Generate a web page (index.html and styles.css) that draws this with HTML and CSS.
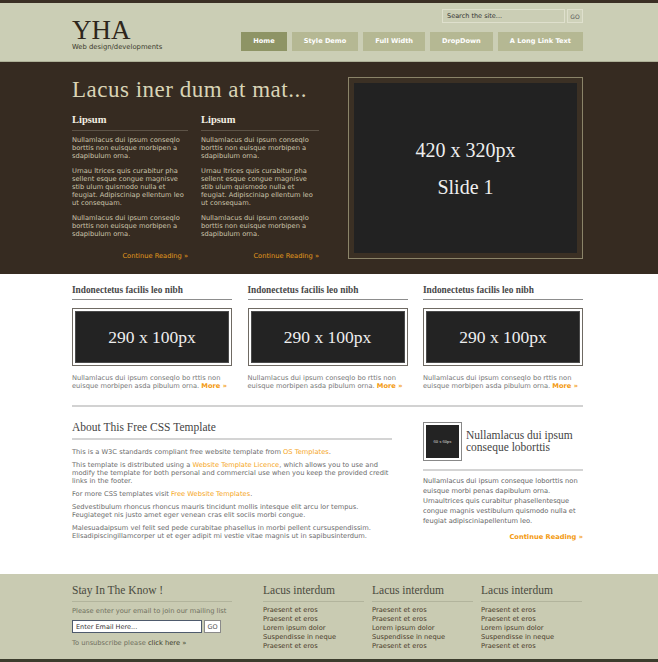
FILE: index.html
```html
<!DOCTYPE html>
<html lang="en">
<head>
<meta charset="utf-8">
<title>YHA</title>
<link rel="stylesheet" href="styles.css">
</head>
<body>
<div class="topbar"></div>
<header class="header">
  <div class="wrap header-inner">
    <div class="logo">
      <h1>YHA</h1>
      <p>Web design/developments</p>
    </div>
    <div class="header-right">
      <form class="search">
        <input type="text" class="search-input" value="Search the site...">
        <button type="button" class="search-go">GO</button>
      </form>
      <nav class="nav">
        <a class="active">Home</a>
        <a>Style Demo</a>
        <a>Full Width</a>
        <a>DropDown</a>
        <a>A Long Link Text</a>
      </nav>
    </div>
  </div>
</header>
<section class="hero">
  <div class="wrap hero-inner">
    <div class="hero-text">
      <h2>Lacus iner dum at mat...</h2>
      <div class="hero-cols">
        <div class="hero-col">
          <h3>Lipsum</h3>
          <p>Nullamlacus dui ipsum conseqlo borttis non euisque morbipen a sdapibulum orna.</p>
          <p>Urnau ltrices quis curabitur pha sellent esque congue magnisve stib ulum quismodo nulla et feugiat. Adipisciniap ellentum leo ut consequam.</p>
          <p>Nullamlacus dui ipsum conseqlo borttis non euisque morbipen a sdapibulum orna.</p>
          <div class="more-link"><a>Continue Reading &raquo;</a></div>
        </div>
        <div class="hero-col">
          <h3>Lipsum</h3>
          <p>Nullamlacus dui ipsum conseqlo borttis non euisque morbipen a sdapibulum orna.</p>
          <p>Urnau ltrices quis curabitur pha sellent esque congue magnisve stib ulum quismodo nulla et feugiat. Adipisciniap ellentum leo ut consequam.</p>
          <p>Nullamlacus dui ipsum conseqlo borttis non euisque morbipen a sdapibulum orna.</p>
          <div class="more-link"><a>Continue Reading &raquo;</a></div>
        </div>
      </div>
    </div>
    <div class="slider">
      <div class="slide"><span>420 x 320px</span><span>Slide 1</span></div>
    </div>
  </div>
</section>
<main class="wrap">
  <div class="boxes">
    <div class="box">
      <h4>Indonectetus facilis leo nibh</h4>
      <div class="ph"><div class="ph-in">290 x 100px</div></div>
      <p><span>Nullamlacus dui ipsum conseqlo bo rttis non euisque morbipen asda pibulum orna.</span> <a class="more">More &raquo;</a></p>
    </div>
    <div class="box">
      <h4>Indonectetus facilis leo nibh</h4>
      <div class="ph"><div class="ph-in">290 x 100px</div></div>
      <p><span>Nullamlacus dui ipsum conseqlo bo rttis non euisque morbipen asda pibulum orna.</span> <a class="more">More &raquo;</a></p>
    </div>
    <div class="box">
      <h4>Indonectetus facilis leo nibh</h4>
      <div class="ph"><div class="ph-in">290 x 100px</div></div>
      <p><span>Nullamlacus dui ipsum conseqlo bo rttis non euisque morbipen asda pibulum orna.</span> <a class="more">More &raquo;</a></p>
    </div>
  </div>
  <div class="main-row">
    <div class="about">
      <h2>About This Free CSS Template</h2>
      <p>This is a W3C standards compliant free website template from <a>OS Templates</a>.</p>
      <p>This template is distributed using a <a>Website Template Licence</a>, which allows you to use and modify the template for both personal and commercial use when you keep the provided credit links in the footer.</p>
      <p>For more CSS templates visit <a>Free Website Templates</a>.</p>
      <p>Sedvestibulum rhoncus rhoncus mauris tincidunt mollis intesque elit arcu lor tempus. Feugiateget nis justo amet eger venean cras elit sociis morbi congue.</p>
      <p>Malesuadaipsum vel felit sed pede curabitae phasellus in morbi pellent cursuspendissim. Elisadipiscingillamcorper ut et eger adipit mi vestie vitae magnis ut in sapibusinterdum.</p>
    </div>
    <aside class="side">
      <div class="side-head">
        <div class="thumb"><div class="thumb-in">60 x 60px</div></div>
        <h3>Nullamlacus dui ipsum conseque loborttis</h3>
      </div>
      <p>Nullamlacus dui ipsum conseque loborttis non euisque morbi penas dapibulum orna. Urnaultrices quis curabitur phasellentesque congue magnis vestibulum quismodo nulla et feugiat adipisciniapellentum leo.</p>
      <div class="cont"><a class="more">Continue Reading &raquo;</a></div>
    </aside>
  </div>
</main>
<footer class="footer">
  <div class="wrap footer-inner">
    <div class="f-news">
      <h3>Stay In The Know !</h3>
      <p>Please enter your email to join our mailing list</p>
      <form class="sub">
        <input type="text" value="Enter Email Here...">
        <button type="button">GO</button>
      </form>
      <p class="unsub">To unsubscribe please <a>click here &raquo;</a></p>
    </div>
    <div class="f-col">
      <h3>Lacus interdum</h3>
      <ul>
        <li><a>Praesent et eros</a></li>
        <li><a>Praesent et eros</a></li>
        <li><a>Lorem ipsum dolor</a></li>
        <li><a>Suspendisse in neque</a></li>
        <li><a>Praesent et eros</a></li>
      </ul>
    </div>
    <div class="f-col">
      <h3>Lacus interdum</h3>
      <ul>
        <li><a>Praesent et eros</a></li>
        <li><a>Praesent et eros</a></li>
        <li><a>Lorem ipsum dolor</a></li>
        <li><a>Suspendisse in neque</a></li>
        <li><a>Praesent et eros</a></li>
      </ul>
    </div>
    <div class="f-col">
      <h3>Lacus interdum</h3>
      <ul>
        <li><a>Praesent et eros</a></li>
        <li><a>Praesent et eros</a></li>
        <li><a>Lorem ipsum dolor</a></li>
        <li><a>Suspendisse in neque</a></li>
        <li><a>Praesent et eros</a></li>
      </ul>
    </div>
  </div>
</footer>
<div class="bottombar"></div>
</body>
</html>
```
FILE: styles.css
```css
* { box-sizing: border-box; }
html, body { margin: 0; padding: 0; }
body {
  background: #fff;
  font-family: "DejaVu Sans", Verdana, sans-serif;
  font-size: 6.7px;
  color: #666;
  width: 658px;
}
a { text-decoration: none; }
.wrap { width: 511px; margin-left: 72px; }

.topbar { height: 3px; background: #3a2f24; }
.header { background: #cbceb5; height: 59px; border-bottom: 1px solid #aeb097; }
.header-inner { display: flex; justify-content: space-between; }
.logo { padding-top: 14px; }
.logo h1 { margin: 0; font: normal 27px/27px "Liberation Serif", "Times New Roman", serif; color: #2e261b; }
.logo p { margin: -1px 0 0; font-size: 6.8px; line-height: 8px; color: #3a3a2c; }
.header-right { display: flex; flex-direction: column; align-items: flex-end; padding-top: 6px; }
.search { display: flex; gap: 2px; margin: 0; }
.search-input { width: 123px; height: 14px; border: 1px solid #dfe0cd; background: #cbceb5; font: 6.5px "DejaVu Sans", sans-serif; color: #333; padding: 0 0 0 4px; margin: 0; outline: none; }
.search-go { width: 16px; height: 14px; border: 1px solid #dfe0cd; background: #cfd2ba; font: 6px "DejaVu Sans", sans-serif; color: #555; padding: 0; margin: 0; }
.nav { display: flex; gap: 5px; margin-top: 9px; }
.nav a { display: block; height: 19px; line-height: 19px; padding: 0 12px; background: #b5b893; color: #fff; font-weight: bold; font-size: 6.6px; }
.nav a.active { background: #8e9465; }

.hero { background: #362b21; height: 212px; padding-top: 15px; }
.hero-inner { display: flex; justify-content: space-between; align-items: flex-start; }
.hero-text { width: 247px; padding-top: 2px; }
.hero-text h2 { margin: 0 0 13px; font: normal 23px/22px "Liberation Serif", serif; letter-spacing: 0.5px; color: #d9d4b6; white-space: nowrap; }
.hero-cols { display: grid; grid-template-columns: 116px 118px; column-gap: 13px; }
.hero-col h3 { margin: 0 0 5px; padding-bottom: 4px; border-bottom: 1px solid #5d5347; font: bold 10.5px/12px "Liberation Serif", serif; color: #f4f0e4; }
.hero-col p { margin: 0 0 6px; line-height: 8.2px; color: #cbc4ab; }
.more-link { text-align: right; padding-top: 8px; line-height: 8.2px; }
.more-link a { color: #e39a1d; }
.slider { width: 235px; height: 182px; border: 1px solid #8b8469; padding: 5px; background: #3b3024; }
.slide { height: 100%; background: #222; display: flex; flex-direction: column; align-items: center; justify-content: center; gap: 17px; font: 20px/20px "Liberation Serif", serif; color: #eee; }

.boxes { display: flex; justify-content: space-between; padding: 11px 0 15px; border-bottom: 2px solid #d2d2d2; }
.box { width: 160px; }
.box h4 { margin: 0; padding-bottom: 3px; border-bottom: 1px solid #8d8d8d; font: bold 9.3px/11px "Liberation Serif", serif; color: #484848; }
.ph { margin-top: 8px; height: 58px; border: 1px solid #6f6a63; padding: 2px; background: #fff; }
.ph-in { height: 100%; background: #232323; border: 1px solid #4a4a4a; display: flex; align-items: center; justify-content: center; font: 17.5px "Liberation Serif", serif; color: #eee; }
.box p { margin: 8px 0 0; line-height: 8px; color: #777; }
.more { color: #f39a10; font-weight: bold; }

.main-row { display: flex; justify-content: space-between; align-items: flex-start; padding: 14px 0 29px; }
.about { width: 320px; }
.about h2 { margin: 0 0 8px; padding-bottom: 4px; border-bottom: 2px solid #d4d4d4; font: normal 11.5px/13px "Liberation Serif", serif; color: #444; }
.about p { margin: 0 0 5px; line-height: 8px; color: #6b6b6b; }
.about a { color: #f5a623; }
.side { width: 160px; padding-top: 1px; }
.side-head { display: flex; align-items: center; gap: 4px; padding-bottom: 8px; border-bottom: 2px solid #d4d4d4; }
.thumb { width: 39px; height: 39px; border: 1px solid #888; padding: 2px; background: #fff; flex: none; }
.thumb-in { height: 100%; background: #232323; display: flex; align-items: center; justify-content: center; font: 4.5px "Liberation Serif", serif; color: #ddd; }
.side-head h3 { margin: 0; font: normal 11.5px/11.5px "Liberation Serif", serif; color: #444; }
.side p { margin: 5px 0 0; line-height: 10px; color: #666; }
.side .cont { text-align: right; margin-top: 6px; line-height: 10px; }

.footer { background: #c9cbb2; height: 85px; padding-top: 10px; }
.footer-inner { display: flex; }
.f-news { width: 160px; margin-right: 31px; }
.footer h3 { margin: 0; padding-bottom: 4px; border-bottom: 1px solid #b2b49c; font: normal 11.5px/13px "Liberation Serif", serif; color: #4a4a40; }
.f-news p { margin: 5px 0 0; line-height: 8px; color: #707060; }
.f-news p a { color: #3b3b2b; }
.sub { display: flex; gap: 2px; margin: 5px 0 0; }
.sub input { width: 130px; height: 13px; border: 1px solid #4e5a6d; background: #fff; font: 6.5px "DejaVu Sans", sans-serif; color: #333; padding: 0 0 0 3px; margin: 0; }
.sub button { width: 17px; height: 13px; border: 1px solid #8a8a8a; background: #fff; font: 6.5px "DejaVu Sans", sans-serif; color: #555; padding: 0; margin: 0; }
.f-news p.unsub { margin-top: 6px; }
.f-col { width: 101px; margin-right: 8px; }
.f-col:last-child { margin-right: 0; }
.f-col ul { list-style: none; margin: 4px 0 0; padding: 0; line-height: 9px; }
.f-col a { color: #4b3b2a; }
.bottombar { height: 4px; background: #3c3d2d; }
```
